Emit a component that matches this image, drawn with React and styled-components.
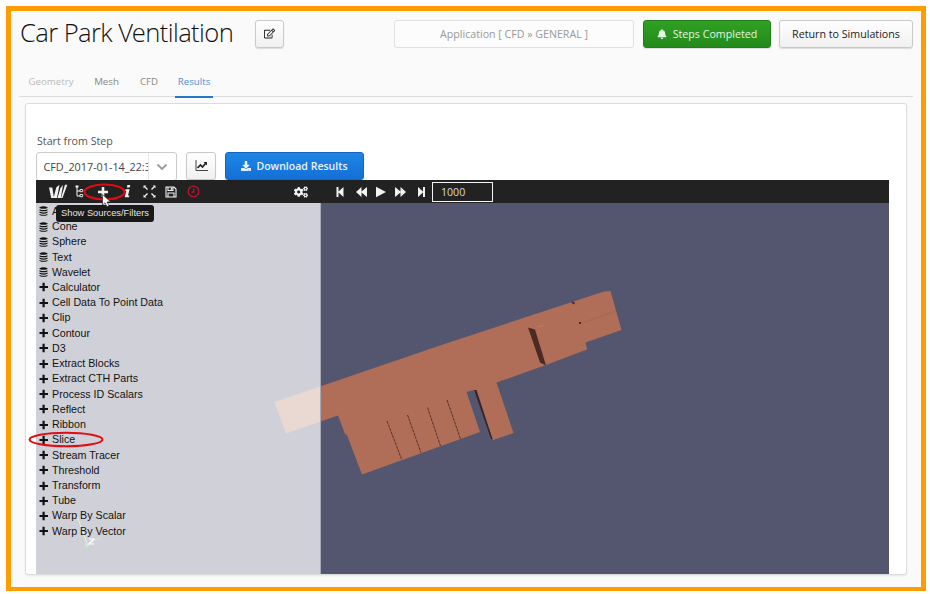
import React from "react";
import styled, { createGlobalStyle, css } from "styled-components";
import { FaBell, FaDownload, FaRegEdit, FaCogs } from "react-icons/fa";

const Global = createGlobalStyle`
  * { box-sizing: border-box; }
  body { margin: 0; background: #fff; font-family: "Open Sans", sans-serif; }
`;

const Frame = styled.div`
  width: 920px;
  height: 585px;
  margin: 6px 0 0 6px;
  border: 5px solid #ff9c00;
  border-bottom-width: 4px;
  background: #fafafa;
  padding: 9px 8px 0;
  overflow: hidden;
`;

const Header = styled.header`
  display: flex;
  height: 28px;
`;

const Title = styled.h1`
  margin: 0 0 0 1px;
  width: 235px;
  font-family: "Open Sans Light", "Open Sans", sans-serif;
  font-size: 25.6px;
  font-weight: 300;
  line-height: 26px;
  letter-spacing: -0.6px;
  white-space: nowrap;
  color: #111;
`;

const variants = {
  plain: css`
    border: 1px solid #c9c9c9;
    background: linear-gradient(#fff, #f0f0f0);
    color: #222;
  `,
  green: css`
    border: 1px solid #207e19;
    background: linear-gradient(#30a024, #248a1c);
    color: #e4f5e2;
  `,
  blue: css`
    border: 1px solid #1664bd;
    background: linear-gradient(#1d86e4, #146fd7);
    color: #e8f3ff;
    font-weight: 600;
  `,
  ghost: css`
    border: 1px solid #e0e0e0;
    background: #fcfcfc;
    color: #999;
    box-shadow: none;
  `,
};

const Button = styled.button`
  display: flex;
  flex: none;
  align-items: center;
  justify-content: center;
  gap: ${(p) => p.$gap ?? 6}px;
  width: ${(p) => p.$w}px;
  height: 28px;
  margin: 0 0 0 ${(p) => p.$ml ?? 0}px;
  padding: 0 0 1px;
  border-radius: 3px;
  box-shadow: 0 1px 1px rgba(0, 0, 0, 0.12);
  font-family: inherit;
  font-size: ${(p) => p.$fs ?? 10.7}px;
  white-space: nowrap;
  ${(p) => variants[p.$variant ?? "plain"]}
`;

const Tabs = styled.nav`
  display: flex;
  height: 49px;
  padding: 22px 0 0 1px;
  border-bottom: 1px solid #dcdcdc;
`;

const Tab = styled.a`
  height: 28px;
  width: ${(p) => p.$w}px;
  margin-right: ${(p) => p.$mr ?? 0}px;
  text-align: center;
  font-size: 9.7px;
  line-height: 23px;
  color: ${(p) => (p.$state === "active" ? "#4a90cf" : p.$state === "disabled" ? "#bbb" : "#888")};
  border-bottom: 2px solid ${(p) => (p.$state === "active" ? "#2378cb" : "transparent")};
`;

const Panel = styled.main`
  width: 882px;
  height: 472px;
  margin: 6px 0 0 6px;
  padding: 31px 16px 0 10px;
  background: #fff;
  border: 1px solid #dcdcdc;
  border-radius: 3px;
  box-shadow: 0 1px 2px rgba(0, 0, 0, 0.08);
`;

const Label = styled.label`
  display: block;
  height: 17px;
  padding-left: 1px;
  font-size: 10.7px;
  line-height: 13px;
  color: #555;
`;

const Controls = styled.div`
  display: flex;
  height: 28px;
`;

const Select = styled.div`
  display: flex;
  width: 141px;
  height: 29px;
  border: 1px solid #ccc;
  border-radius: 3px;
  font-size: 10.8px;
  line-height: 27px;
  color: #444;
`;

const SelectValue = styled.span`
  width: 104px;
  margin-left: 6.5px;
  overflow: hidden;
  white-space: nowrap;
`;

const SelectArrow = styled.span`
  display: flex;
  flex: 1;
  align-items: center;
  justify-content: center;
  border-left: 1px solid #e5e5e5;
`;

const Viewer = styled.section`
  width: 853px;
  position: relative;
`;

const Toolbar = styled.div`
  display: grid;
  grid-template-columns: 22px 22px 24px 24px 20px 24px 20px 87px 22px 18px 20px 22px 16px 24px 18px 2px 61px;
  align-items: center;
  height: 23px;
  padding-left: 11px;
  background: #222;
  color: #f2f2f2;
`;

const Tool = styled.span`
  display: flex;
  justify-content: center;
`;

const FrameInput = styled.div`
  height: 20px;
  padding-left: 8px;
  border: 1px solid #f4f4f4;
  font-size: 10.6px;
  line-height: 18px;
  color: #ddd;
`;

const Stage = styled.div`
  position: relative;
  height: 371px;
  background: #545670;
`;

const Scene = styled.svg`
  position: absolute;
  inset: 0;
`;

const FilterList = styled.ul`
  position: relative;
  width: 285px;
  height: 371px;
  margin: 0;
  padding: 0.7px 0 0 3px;
  list-style: none;
  background: rgba(255, 255, 255, 0.73);
  border-right: 1px solid #a9aab6;
`;

const FilterItem = styled.li`
  display: flex;
  align-items: center;
  gap: 3px;
  height: 15.24px;
  font: 10.7px/15px "Liberation Sans", Arial, sans-serif;
  color: #111;

  svg { flex: none; }
`;

const Tooltip = styled.div`
  position: absolute;
  left: 20px;
  top: 25px;
  width: 98px;
  height: 17px;
  border-radius: 3px;
  background: #191919;
  color: #e5e5e5;
  text-align: center;
  font: 9.3px/16px "Liberation Sans", Arial, sans-serif;
`;

const Marks = styled.svg`
  position: absolute;
  left: -10px;
  top: 0;
  pointer-events: none;
`;

const Icon = ({ w = 12, h = 12, children }) => (
  <svg width={w} height={h} viewBox={`0 0 ${w} ${h}`} fill="currentColor">
    {children}
  </svg>
);

const Database = () => (
  <Icon w={10} h={10}>
    <path d="M.5 1.300Q4.500-.9 8.500 1.300V2Q4.500 3.700.5 2ZM.5 3.200Q4.500 4.900 8.500 3.200V4.400Q4.500 6.100.5 4.400ZM.5 5.600Q4.500 7.300 8.500 5.600V6.800Q4.500 8.500.5 6.800ZM.5 8Q4.500 9.700 8.500 8V9Q4.500 10.700.5 9Z" />
  </Icon>
);

const Plus = ({ big }) => (
  <Icon w={10} h={10}>
    {big ? <path d="M3.700 0h2.600v3.700H10v2.600H6.300V10H3.700V6.300H0V3.700h3.700z" /> : <path d="M3.500.7h2.200v3.200H9V6.100H5.700V9.300H3.500V6.100H.5V3.900h3z" />}
  </Icon>
);

const Logo = () => (
  <Icon w={19} h={15}>
    <path d="M0 3.500h3.300L5 14H2.200zM4.600 14 7.200 3.500 10.500.8 8 14zM8.600 14 11.400 4 14 1 11.800 14zM12 14 16 .8h2.300L13.500 14z" />
  </Icon>
);

const Tree = () => (
  <Icon w={10} h={13}>
    <path d="M2 2v9h3M2 6h3" fill="none" stroke="currentColor" />
    <path d="M.5.500h3v2h-3z" />
    <path d="M5 4.500h2.700v2.200H5zM5 9.500h2.700v2.200H5z" fill="none" stroke="currentColor" strokeWidth=".9" />
  </Icon>
);

const Info = () => (
  <Icon w={7} h={13}>
    <path d="M3.400 0h2.800L5.700 2.500H2.900zM1.600 4.200h4L4 10.500h1.300l-.3 1.700H.7L2.300 6H1.200z" />
  </Icon>
);

const Expand = () => (
  <Icon w={13} h={13}>
    <path d="M1.500 1.500l3 3M11.500 1.500l-3 3M1.500 11.500l3-3M11.500 11.500l-3-3" stroke="currentColor" strokeWidth="1.400" />
    <path d="M.5.500h2.800L.5 3.300zM12.500.500v2.800L9.700.500zM.5 12.500V9.700l2.800 2.800zM12.500 12.500H9.700l2.800-2.800z" />
  </Icon>
);

const Save = () => (
  <Icon w={12} h={12}>
    <path d="M1 1h8l2 2v8H1zM3 1v3.500h5V1M3 11V7h6v4" fill="none" stroke="currentColor" strokeWidth="1.100" />
    <path d="M5.700 1.500h1.500v2.300H5.700z" />
  </Icon>
);

const Clock = () => (
  <Icon w={13} h={13}>
    <g fill="none" stroke="#c3122d" strokeWidth="1.300">
      <circle cx="6.500" cy="6.500" r="5.300" />
      <path d="M6.700 3.500v3.700H4.500" />
    </g>
  </Icon>
);

const mediaPaths = {
  first: "M1.500 1h2v4.600L8.500 1v10L3.500 6.400V11h-2z",
  rewind: "M0 6 5.500 1v4.500L11 1v10L5.500 6.500V11z",
  play: "M1 .7 11 6 1 11.300z",
  forward: "M0 1l5.500 4.500V1L11 6 5.500 11V6.500L0 11z",
  last: "M2 1l5 4.600V1h2v10H7V6.400L2 11z",
};

const Media = ({ name }) => (
  <Tool>
    <Icon w={11} h={12}><path d={mediaPaths[name]} /></Icon>
  </Tool>
);

const sources = ["Arrow", "Cone", "Sphere", "Text", "Wavelet"];
const filters = [
  "Calculator", "Cell Data To Point Data", "Clip", "Contour", "D3", "Extract Blocks",
  "Extract CTH Parts", "Process ID Scalars", "Reflect", "Ribbon", "Slice", "Stream Tracer",
  "Threshold", "Transform", "Tube", "Warp By Scalar", "Warp By Vector",
];

const CarPark = () => (
  <Scene width="853" height="371" viewBox="36 203 853 371">
    <path
      fill="#b06e58"
      d="M274.500 402 320 386.500 440 345.500 604 291.500 610.500 291 621.500 330 585.500 342.500 587 349.500 546 365 496.500 382.500 513.500 433 493 440 474 390 466.500 392 480 432 362 474.500 347 435 345 434 338 415.500 286 433.500Z"
    />
    <path fill="#4b2a24" d="M528 327.500 535 329.500 546 365.500 540 362.500Z" />
    <path fill="#bd7660" d="M535 327 544 324 542 327Z" />
    <path fill="#35242a" d="M474 390 476.500 390 492.500 439 491 439Z" />
    <g fill="none" stroke="#4e2924" strokeWidth=".9" strokeDasharray="3 .8">
      <path d="M387 421 401.500 459M407.500 415 421 452.500M427.500 407.500 440.500 446M447 400 460.500 439" />
      <path d="M572 302l3 2M579 323h2" strokeWidth="2" />
    </g>
    <path d="M582 323 616 311" stroke="#a06150" strokeWidth=".7" />
    <path d="M77 516 87 543" stroke="#c5c560" strokeWidth="1" />
    <path d="M87 545 102 537" stroke="#c98590" strokeWidth=".6" />
    <circle cx="87" cy="545" r="2" fill="#34bd68" />
    <path d="M89 539h5l-5 5h5" stroke="#fff" strokeWidth="1.200" fill="none" />
  </Scene>
);

export default function App() {
  return (
    <>
      <Global />
      <Frame>
        <Header>
          <Title>Car Park Ventilation</Title>
          <Button $w={29}><FaRegEdit size={11} /></Button>
          <Button $variant="ghost" $w={240} $ml={110} $fs={10.65}>Application [ CFD » GENERAL ]</Button>
          <Button $variant="green" $w={128} $ml={9}><FaBell size={10} />Steps Completed</Button>
          <Button $w={134} $ml={8}>Return to Simulations</Button>
        </Header>
        <Tabs>
          <Tab $w={62} $state="disabled">Geometry</Tab>
          <Tab $w={49}>Mesh</Tab>
          <Tab $w={36} $mr={8}>CFD</Tab>
          <Tab $w={38} $state="active">Results</Tab>
        </Tabs>
        <Panel>
          <Label>Start from Step</Label>
          <Controls>
            <Select>
              <SelectValue>CFD_2017-01-14_22:35</SelectValue>
              <SelectArrow>
                <Icon w={12} h={8}><path d="M1.500 1.500 6 6l4.500-4.500" fill="none" stroke="#999" strokeWidth="1.800" /></Icon>
              </SelectArrow>
            </Select>
            <Button $w={30} $ml={9}>
              <Icon w={13} h={12}>
                <path d="M1 0v10.500h12" fill="none" stroke="#444" />
                <path d="M2.500 8 5.500 5 7.500 7 10.500 3.500" fill="none" stroke="#222" strokeWidth="1.700" />
                <path d="M8.500 2H12v3.500z" fill="#222" />
              </Icon>
            </Button>
            <Button $variant="blue" $w={139} $ml={9} $gap={5} $fs={10.55}><FaDownload size={10} />Download Results</Button>
          </Controls>
          <Viewer>
            <Toolbar>
              <Tool><Logo /></Tool>
              <Tool><Tree /></Tool>
              <Tool><Plus big /></Tool>
              <Tool><Info /></Tool>
              <Tool><Expand /></Tool>
              <Tool><Save /></Tool>
              <Tool><Clock /></Tool>
              <span />
              <Tool><FaCogs size={14} /></Tool>
              <span />
              <Media name="first" />
              <Media name="rewind" />
              <Media name="play" />
              <Media name="forward" />
              <Media name="last" />
              <span />
              <FrameInput>1000</FrameInput>
            </Toolbar>
            <Stage>
              <CarPark />
              <FilterList>
                {sources.map((s) => <FilterItem key={s}><Database />{s}</FilterItem>)}
                {filters.map((f) => <FilterItem key={f}><Plus />{f}</FilterItem>)}
              </FilterList>
            </Stage>
            <Tooltip>Show Sources/Filters</Tooltip>
            <Marks width="160" height="290" viewBox="26 180 160 290">
              <g fill="none" stroke="#e30b12" strokeWidth="2">
                <ellipse cx="104.500" cy="192" rx="20" ry="7.500" />
                <ellipse cx="66" cy="439.500" rx="36.500" ry="6.800" />
              </g>
              <path d="M102.500 194.500v10.500l2.500-2.200 2 4 2-1-2-3.800 3.500-.2z" fill="#fff" stroke="#111" strokeWidth=".6" />
            </Marks>
          </Viewer>
        </Panel>
      </Frame>
    </>
  );
}
